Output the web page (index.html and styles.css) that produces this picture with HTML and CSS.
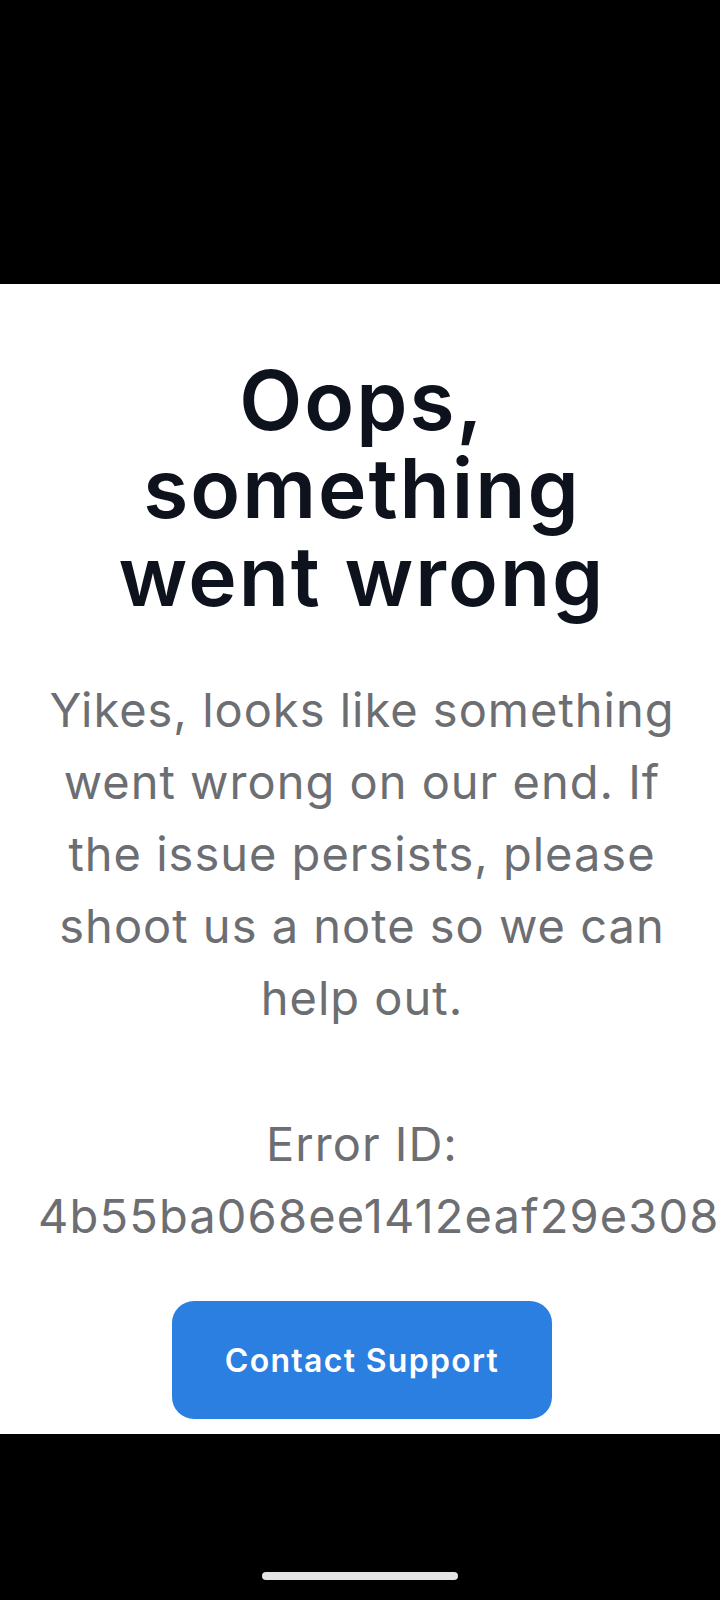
FILE: index.html
```html
<!DOCTYPE html>
<html lang="en">
<head>
<meta charset="utf-8">
<title>Oops, something went wrong</title>
<link rel="stylesheet" href="styles.css">
</head>
<body>
<div class="screen">
  <div class="top-bar"></div>
  <main class="content">
    <h1 class="title">Oops,<br>something<br>went wrong</h1>
    <p class="message">Yikes, looks like something<br>went wrong on our end. If<br>the issue persists, please<br>shoot us a note so we can<br>help out.</p>
    <div class="error-id">
      <span class="error-label">Error ID:</span>
      <span class="error-code">4b55ba068ee1412eaf29e308</span>
    </div>
    <button class="support-btn" type="button">Contact Support</button>
  </main>
  <div class="bottom-bar"><span class="home-indicator"></span></div>
</div>
</body>
</html>
```

FILE: styles.css
```css
* { box-sizing: border-box; }
html, body { margin: 0; padding: 0; background: #000; }
body { width: 720px; height: 1600px; overflow: hidden; font-family: Inter, "Noto Sans", sans-serif; }
.screen { display: flex; flex-direction: column; width: 720px; height: 1600px; }
.top-bar { height: 284px; background: #000; flex: none; }
.content {
  flex: none;
  height: 1150px;
  background: #fff;
  display: flex;
  flex-direction: column;
  align-items: center;
  padding: 73px 34px 0 38px;
  overflow: hidden;
  text-align: center;
}
.title {
  margin: 0;
  font-size: 82px;
  line-height: 88px;
  font-weight: 600;
  color: #0e121d;
  letter-spacing: 2px;
}
.message {
  margin: 53px 0 0;
  font-size: 47px;
  line-height: 72px;
  font-weight: 400;
  color: #6c6e72;
  letter-spacing: 1px;
  white-space: nowrap;
}
.error-id {
  margin: 74px 0 0;
  align-self: stretch;
  display: flex;
  flex-direction: column;
  font-size: 47px;
  line-height: 72px;
  color: #6c6e72;
  white-space: nowrap;
}
.error-label { display: block; text-align: center; letter-spacing: 1px; }
.error-code {
  display: block;
  margin-right: -34px;
  text-align: left;
  letter-spacing: 1.15px;
}
.support-btn {
  margin-top: 49px;
  width: 380px;
  height: 118px;
  border: none;
  border-radius: 22px;
  background: #2b7fe1;
  color: #fff;
  font-family: Inter, sans-serif;
  font-size: 32px;
  font-weight: 600;
  letter-spacing: 1.3px;
}
.bottom-bar {
  flex: 1;
  background: #000;
  display: flex;
  justify-content: center;
  padding-top: 138px;
}
.home-indicator {
  width: 196px;
  height: 8px;
  border-radius: 4px;
  background: #e4e4e4;
}
```
